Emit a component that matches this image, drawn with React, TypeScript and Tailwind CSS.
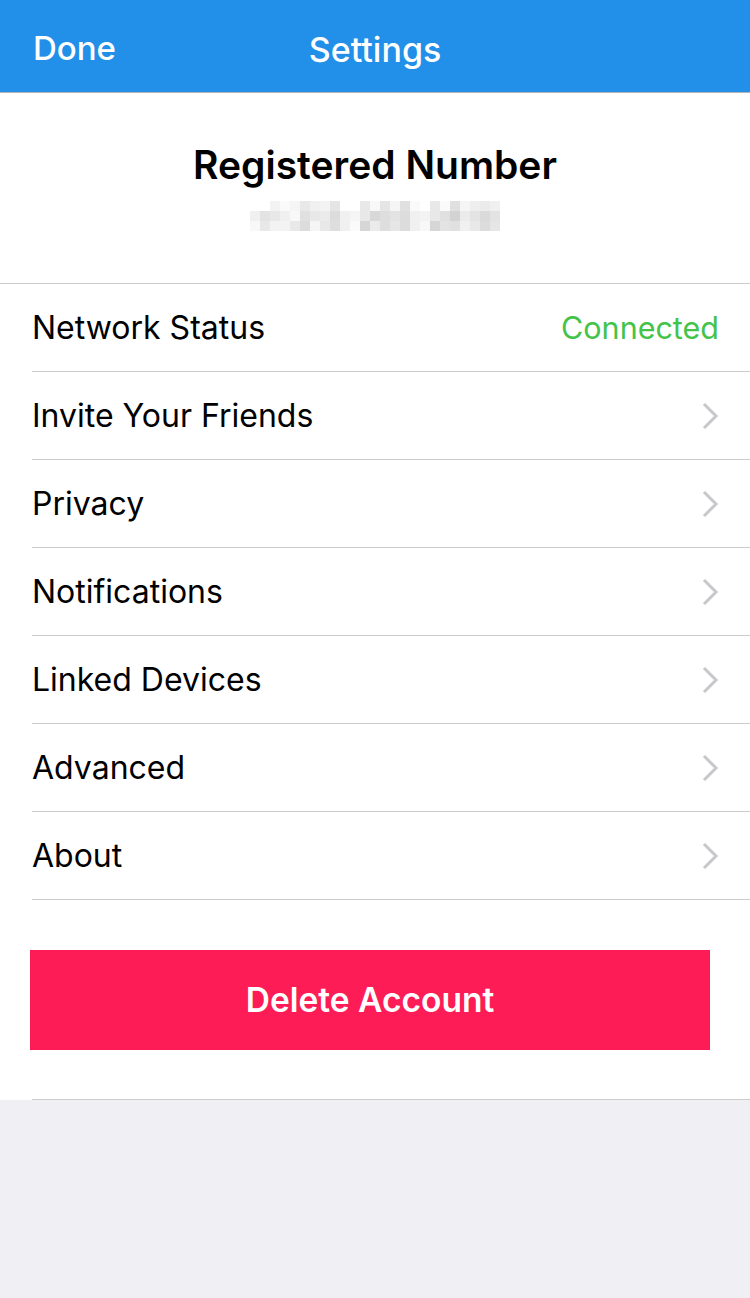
const rows = [
  "Invite Your Friends",
  "Privacy",
  "Notifications",
  "Linked Devices",
  "Advanced",
  "About",
]

// blurred phone number, 3 rows of 10px cells starting at x=250
const blur = [
  ["#fff", "#fff", "#f3f3f3", "#fafafa", "#f5f5f5", "#e8e8e8", "#f0f0f0", "#f3f3f3", "#e5e5e5", "#fff", "#fff", "#e8e8e8", "#f8f8f8", "#e5e5e5", "#f5f5f5", "#e0e0e0", "#fafafa", "#fff", "#e8e8e8", "#fafafa", "#e0e0e0", "#f5f5f5", "#eeeeee", "#ebebeb", "#f0f0f0"],
  ["#f0f0f0", "#e3e3e3", "#e8e8e8", "#f0f0f0", "#f8f8f8", "#e0e0e0", "#e8e8e8", "#ebebeb", "#dcdcdc", "#f0f0f0", "#f5f5f5", "#e8e8e8", "#d8d8d8", "#dedede", "#e3e3e3", "#dcdcdc", "#f0f0f0", "#f3f3f3", "#e8e8e8", "#e0e0e0", "#d3d3d3", "#ebebeb", "#e3e3e3", "#dadada", "#e3e3e3"],
  ["#f8f8f8", "#e8e8e8", "#f3f3f3", "#f3f3f3", "#e8e8e8", "#dcdcdc", "#f5f5f5", "#e8e8e8", "#dedede", "#f0f0f0", "#fafafa", "#d6d6d6", "#ebebeb", "#dedede", "#e6e6e6", "#dcdcdc", "#f0f0f0", "#f8f8f8", "#d6d6d6", "#e3e3e3", "#e0e0e0", "#f0f0f0", "#e8e8e8", "#dcdcdc", "#e6e6e6"],
]

function Chevron() {
  return (
    <svg width="18" height="28" viewBox="0 0 18 28" fill="none">
      <path d="M3 2 L15 14 L3 26" stroke="#c7c7cc" strokeWidth="3" />
    </svg>
  )
}

export default function App() {
  return (
    <div className="min-h-[1298px] bg-[#efeff4] font-['Inter','Noto_Sans',sans-serif] text-black">
      <header className="h-[93px] pt-[6px] bg-[#2290e8] border-b border-[#b4b4b4] grid grid-cols-3 items-center text-white">
        <span className="pl-[33px] text-[33px] font-medium">Done</span>
        <span className="text-center text-[34px] font-medium whitespace-nowrap">Settings</span>
        <span />
      </header>

      <div className="bg-white">
        <div className="h-[191px] flex flex-col items-center border-b border-[#cccccc]">
          <h1 className="mt-[49px] text-[39px] font-semibold leading-[46px] whitespace-nowrap">Registered Number</h1>
          <div className="mt-[13px] flex flex-col">
            {blur.map((line, i) => (
              <div key={i} className="flex">
                {line.map((c, j) => (
                  <div key={j} className="w-[10px] h-[10px]" style={{ backgroundColor: c }} />
                ))}
              </div>
            ))}
          </div>
        </div>

        <div className="pl-8">
          <div className="h-[88px] flex items-center justify-between pr-[31px] border-b border-[#cccccc] text-[32px]">
            <span>Network Status</span>
            <span className="text-[#44c34a] text-[30.5px]">Connected</span>
          </div>
          {rows.map((r) => (
            <div key={r} className="h-[88px] flex items-center justify-between pr-[31px] border-b border-[#cccccc] text-[32px]">
              <span>{r}</span>
              <Chevron />
            </div>
          ))}
        </div>

        <div className="pt-[50px] pb-[49px] pl-[30px] border-b border-[#cccccc] ml-8">
          <button className="-ml-8 w-[680px] h-[100px] bg-[#fd1c55] text-white text-[33.5px] font-semibold">
            Delete Account
          </button>
        </div>
      </div>
    </div>
  )
}
